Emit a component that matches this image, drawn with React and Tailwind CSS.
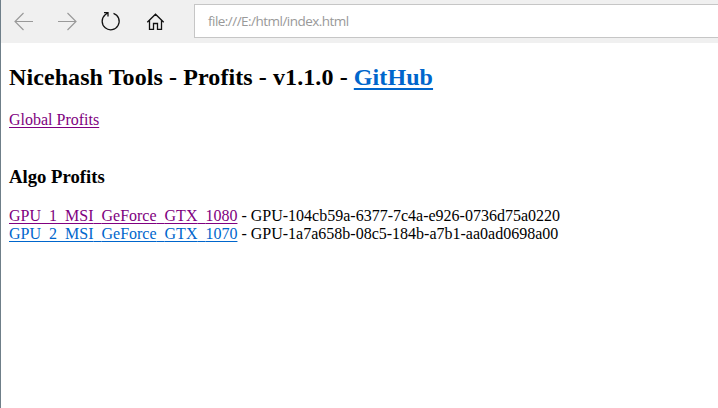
import { Fragment } from "react";

const linkBase = "underline [text-decoration-skip-ink:none]";

const gpus = [
  { name: "GPU_1_MSI_GeForce_GTX_1080", id: "GPU-104cb59a-6377-7c4a-e926-0736d75a0220", visited: true },
  { name: "GPU_2_MSI_GeForce_GTX_1070", id: "GPU-1a7a658b-08c5-184b-a7b1-aa0ad0698a00", visited: false },
];

// Underscores blend into the link's underline instead of doubling it.
function DeviceName({ name }) {
  return name.split("_").map((part, i) => (
    <Fragment key={i}>
      {i > 0 && <span className="text-transparent">_</span>}
      {part}
    </Fragment>
  ));
}

function Toolbar() {
  return (
    <header className="flex h-[43px] items-start bg-[#f0f0f0]">
      <nav className="flex w-[193px] shrink-0 pt-[11px] pl-[12px]">
        <button aria-label="Back" className="mr-[22px]">
          <svg width="22" height="22" viewBox="0 0 22 22" fill="none" stroke="#999" strokeWidth="1.15">
            <path d="M1.5 10.5H20M10.5 2L2 10.5L10.5 19" />
          </svg>
        </button>
        <button aria-label="Forward" className="mr-[22px]">
          <svg width="22" height="22" viewBox="0 0 22 22" fill="none" stroke="#999" strokeWidth="1.15">
            <path d="M1 10.5H19.5M10.5 2L19 10.5L10.5 19" />
          </svg>
        </button>
        <button aria-label="Refresh" className="mr-[22px]">
          <svg width="22" height="22" viewBox="0 0 22 22" fill="none" stroke="#111" strokeWidth="1.3">
            <path d="M12.5 2.3A8.5 8.5 0 1 1 4.2 3.8L6.9 1.7M3 1.6H7V5.6" />
          </svg>
        </button>
        <button aria-label="Home">
          <svg width="22" height="22" viewBox="0 0 22 22" fill="none" stroke="#111" strokeWidth="1.3">
            <path d="M2.3 11.3L10.5 3.2L18.7 11.3M4.5 9.4V18.4H8.5V12.5H12.5V18.4H16.5V9.4" />
          </svg>
        </button>
      </nav>
      <div className="mt-1 flex h-[34px] flex-1 items-center border-y border-l border-[#c6c6c6] bg-white pt-px pl-[13px] font-['Open_Sans',sans-serif] text-[13.5px] text-[#999]">
        <span className="tracking-[-0.53px]">file:///E:/html/index.html</span>
      </div>
    </header>
  );
}

export default function App() {
  return (
    <div className="h-screen w-full overflow-hidden border-l border-[#6f7f89] bg-white">
      <Toolbar />
      <main className="px-2 pt-5 font-['Liberation_Serif',serif] text-base leading-[18px] text-black">
        <h2 className="text-2xl leading-7 font-bold tracking-[0.09px]">
          Nicehash Tools - Profits - v1.1.0 -{" "}
          <a className={`${linkBase} text-[#0066cc] decoration-2 underline-offset-[3px]`}>GitHub</a>
        </h2>
        <p className="mt-5">
          <a className={`${linkBase} text-[#800080] decoration-1 underline-offset-2`}>Global Profits</a>
        </p>
        <h3 className="mt-[37px] text-[18.72px] leading-[22px] font-bold">Algo Profits</h3>
        <ul className="mt-[19px]">
          {gpus.map((gpu) => (
            <li key={gpu.id}>
              <a className={`${linkBase} decoration-1 underline-offset-2 ${gpu.visited ? "text-[#800080]" : "text-[#0066cc]"}`}>
                <DeviceName name={gpu.name} />
              </a>
              {" - "}
              {gpu.id}
            </li>
          ))}
        </ul>
      </main>
    </div>
  );
}
